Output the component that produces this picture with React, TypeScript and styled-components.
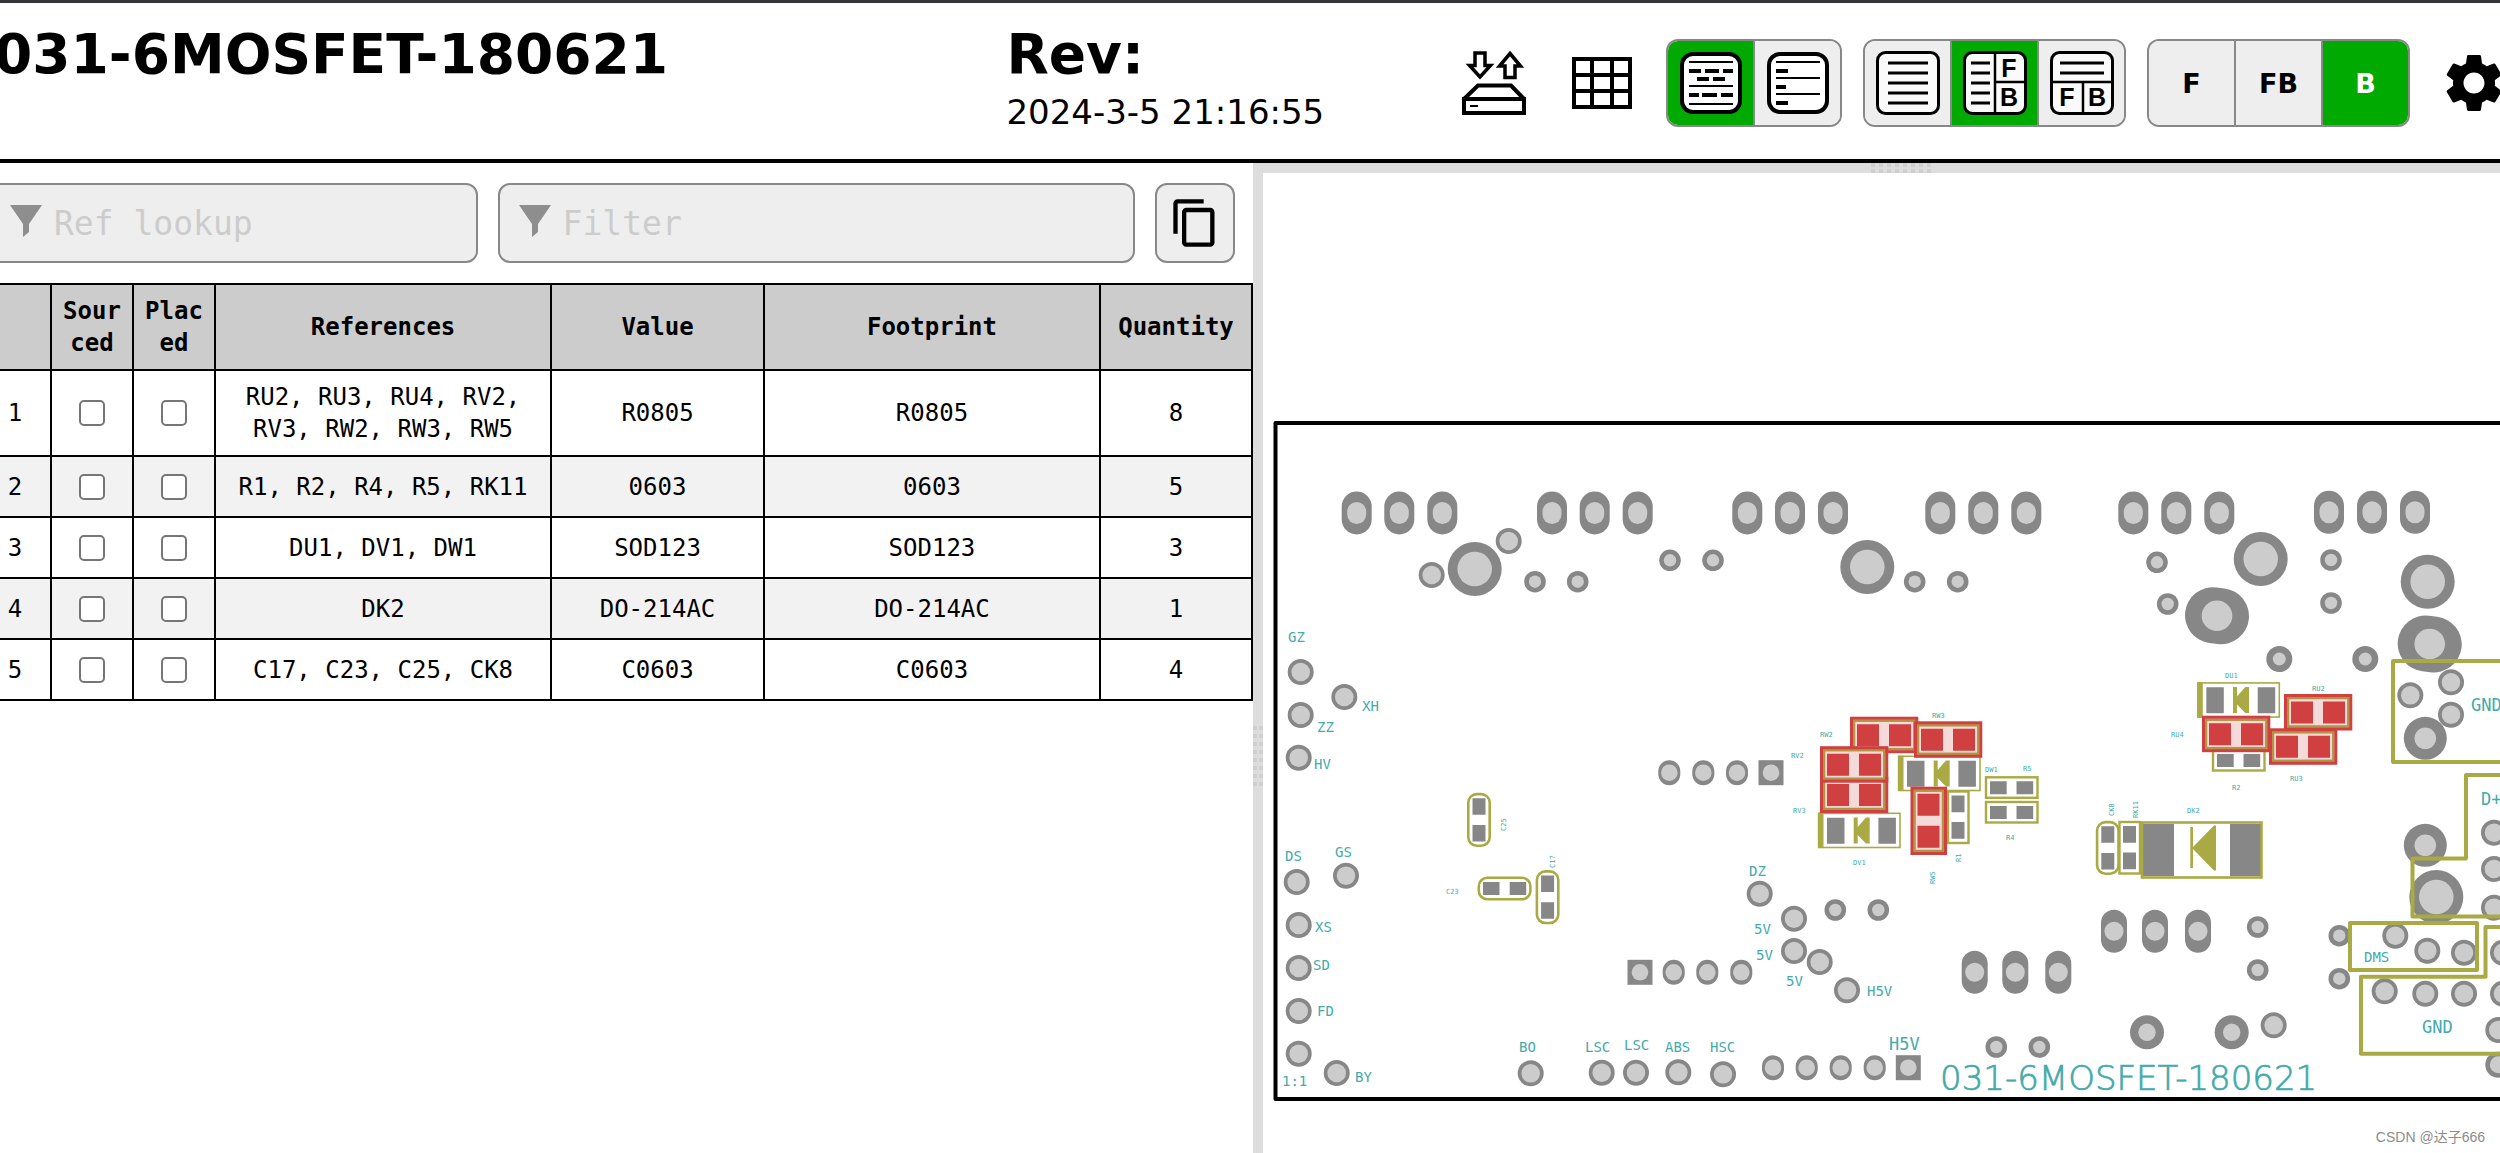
import React from "react";
import styled, { createGlobalStyle, css } from "styled-components";
import { MdContentCopy, MdSettings } from "react-icons/md";

const GlobalStyle = createGlobalStyle`
  * { box-sizing: border-box; }
  body { margin: 0; background: #fff; color: #000; font-family: Verdana, "DejaVu Sans", sans-serif; }
`;

const mono = `Consolas, "DejaVu Sans Mono", monospace`;

/* ---------- page frame ---------- */

const Viewport = styled.div`
  position: relative;
  height: 100vh;
  overflow: hidden;
`;

const Page = styled.div`
  display: flex;
  flex-direction: column;
  min-height: calc(100vh + 196px);
  margin: 0 -38px 0 -22px;
`;

const Header = styled.header`
  display: grid;
  grid-template-columns: minmax(0, 20fr) minmax(0, 9fr) auto;
  padding-left: 16px;
  border-top: 3px solid #363436;
  border-bottom: 4px solid #000;
`;

const HeaderText = styled.div`
  display: flex;
  flex-direction: column;
  gap: 8px;
  padding-top: 21px;
  white-space: nowrap;
`;

const Title = styled.h1`
  margin: 0;
  font-size: 55px;
  line-height: 60px;
  font-weight: 700;
`;

const Revision = styled(Title).attrs({ as: "h2" })``;

const Timestamp = styled.div`
  font-size: 34px;
  line-height: 40px;
`;

const Menu = styled.nav`
  display: flex;
  align-items: center;
  gap: 21px;
  padding: 36px 36px 32px 0;
`;

const IconButton = styled.button`
  display: flex;
  align-items: center;
  justify-content: center;
  padding: 0;
  border: 0;
  background: none;
  color: #000;
  cursor: pointer;
`;

const ToolIcons = styled.div`
  display: flex;
  align-items: center;
  gap: 46px;
  padding-right: 13px;
`;

const SettingsButton = styled(IconButton)`
  width: 56px;
  margin-left: 15px;
  svg { flex: none; }
`;

const ButtonGroup = styled.div`
  display: flex;
  height: 88px;
  border: 2px solid #888;
  border-radius: 12px;
  overflow: hidden;
`;

const GroupButton = styled.button<{ $active?: boolean }>`
  display: flex;
  align-items: center;
  justify-content: center;
  width: 87px;
  padding: 0;
  border: 0;
  border-right: 2px solid #888;
  background: ${(p) => (p.$active ? "#00aa00" : "#eee")};
  color: ${(p) => (p.$active ? "#fff" : "#000")};
  font: 700 27px Verdana, "DejaVu Sans", sans-serif;
  cursor: pointer;
  &:last-child { width: 85px; border-right: 0; }
`;

/* ---------- split panes ---------- */

const Main = styled.main`
  display: flex;
  flex: 1;
`;

const Pane = styled.section`
  flex: 1 1 0;
  min-width: 0;
`;

const Gutter = styled.div<{ $row?: boolean }>`
  display: flex;
  flex: none;
  align-items: center;
  justify-content: center;
  background: #ddd;
  ${(p) => (p.$row ? "height: 10px;" : "width: 10px;")}
`;

const Grip = styled.span<{ $row?: boolean }>`
  width: 10px;
  height: 60px;
  background: repeating-linear-gradient(90deg, transparent 0 4px, #ddd 4px 6px),
    repeating-linear-gradient(180deg, #cfcfcf 0 4px, #ddd 4px 8px);
  ${(p) =>
    p.$row &&
    css`
      width: 60px;
      height: 10px;
      background: repeating-linear-gradient(180deg, transparent 0 4px, #ddd 4px 6px),
        repeating-linear-gradient(90deg, #cfcfcf 0 4px, #ddd 4px 8px);
    `}
`;

/* ---------- filters ---------- */

const FilterBar = styled.form`
  display: flex;
  gap: 20px;
  padding: 20px 18px 20px 11px;
`;

const FilterBox = styled.label<{ $grow: number }>`
  display: flex;
  flex: ${(p) => p.$grow} 1 0;
  align-items: center;
  gap: 12px;
  min-width: 0;
  height: 80px;
  padding: 0 19px;
  border: 2px solid #888;
  border-radius: 12px;
  background: #eee;
  svg { flex: none; margin-bottom: 4px; }
`;

const FilterInput = styled.input`
  flex: 1;
  min-width: 0;
  padding: 0;
  border: 0;
  outline: 0;
  background: none;
  font: 33px ${mono};
  &::placeholder { color: #ccc; opacity: 1; }
`;

const CopyButton = styled(IconButton)`
  width: 80px;
  height: 80px;
  border: 2px solid #888;
  border-radius: 12px;
  background: #eee;
`;

/* ---------- parts table ---------- */

const BomTable = styled.table`
  width: 100%;
  table-layout: fixed;
  border-collapse: collapse;
  font: 24px/32px ${mono};
  text-align: center;
  th, td {
    padding: 10px;
    border: 2px solid #000;
  }
  th { background: #ccc; font-weight: 700; word-break: break-all; }
  tbody tr { height: 61px; }
  tbody tr:nth-child(even) { background: #f2f2f2; }
`;

const Col = styled.col<{ $w?: string }>`
  width: ${(p) => p.$w ?? "auto"};
`;

const Check = styled.input.attrs({ type: "checkbox" })`
  display: block;
  appearance: none;
  width: 26px;
  height: 26px;
  margin: 0 auto;
  border: 2px solid #767676;
  border-radius: 5px;
  background: #fff;
  &:checked { background: #00aa00; }
`;

const BoardSvg = styled.svg`
  display: block;
  width: 100%;
  height: auto;
`;

const Label = styled.text`
  font-family: "DejaVu Sans Mono", monospace;
  fill: #44aaaa;
`;

const BoardName = styled.text`
  font-family: "DejaVu Sans", sans-serif;
  font-weight: 200;
  font-size: 34px;
  fill: #44aaaa;
  stroke: #44aaaa;
  stroke-width: 0.7px;
`;

const Watermark = styled.div`
  position: absolute;
  right: 15px;
  bottom: 7px;
  font: 14px/18px "Liberation Sans", "Noto Sans CJK SC", sans-serif;
  color: #8c8c8c;
`;

/* ---------- icons ---------- */

const SaveIcon = () => (
  <svg width="64" height="66" viewBox="0 0 64 66" fill="none" stroke="#000" strokeWidth="4">
    <path d="M13 3H23V15.500H28.500L18 27L7.500 15.500H13Z" strokeWidth="3.500" />
    <path d="M48 3.500L58.500 16H53V27.500H43V16H37.500Z" strokeWidth="3.500" />
    <path d="M2 49L16 35.500H49L62 49" />
    <path d="M2 49H62V63H2Z" />
    <path d="M8 56H16" strokeWidth="2" />
  </svg>
);

const GridIcon = () => (
  <svg width="60" height="52" viewBox="0 0 60 52" fill="none" stroke="#000" strokeWidth="4">
    <path d="M2 2H58V50H2ZM2 18H58M2 34H58M20 2V50M40 2V50" />
  </svg>
);

const GroupedIcon = () => (
  <svg width="62" height="62" viewBox="0 0 62 62" fill="none" stroke="#000">
    <rect x="2" y="2" width="58" height="58" rx="11" fill="#fff" strokeWidth="4" />
    <path d="M9 10H53M9 34H53M9 52H53" strokeWidth="2" />
    <path d="M9 19H21M25 19H39M43 19H53M17 27H29M33 27H45M9 43H19M22 43H37M41 43H53" strokeWidth="4" />
  </svg>
);

const UngroupedIcon = () => (
  <svg width="62" height="62" viewBox="0 0 62 62" fill="none" stroke="#000">
    <rect x="2" y="2" width="58" height="58" rx="11" fill="#fff" strokeWidth="4" />
    <path d="M9 10H53M9 26H53M9 42H53" strokeWidth="2" />
    <path d="M9 19H21M9 35H19M9 51H21" strokeWidth="4" />
  </svg>
);

const LayoutText = styled.text`
  font: 700 25px "Liberation Sans", Arial, sans-serif;
  text-anchor: middle;
  fill: #000;
  stroke: none;
`;

const LayoutIcon = ({ kind }: { kind: "bom" | "lr" | "tb" }) => (
  <svg width="64" height="64" viewBox="0 0 64 64" fill="none" stroke="#000" strokeWidth="3">
    <rect x="1.500" y="1.500" width="61" height="61" rx="8" fill="#fafafa" />
    {kind === "bom" && <path d="M12 12H52M12 22H52M12 32H52M12 42H52M12 52H52" />}
    {kind === "lr" && (
      <>
        <path d="M8 12H27M8 22H27M8 32H27M8 42H27M8 52H27" />
        <path d="M32 2V62M32 31H62" strokeWidth="2.500" />
        <LayoutText x="46" y="26">F</LayoutText>
        <LayoutText x="46" y="55">B</LayoutText>
      </>
    )}
    {kind === "tb" && (
      <>
        <path d="M10 12H54M10 22H54" />
        <path d="M2 31H62M33 31V62" strokeWidth="2.500" />
        <LayoutText x="17" y="55">F</LayoutText>
        <LayoutText x="47" y="55">B</LayoutText>
      </>
    )}
  </svg>
);

const FunnelIcon = () => (
  <svg width="32" height="32" viewBox="0 0 32 32" fill="#8e8e8e">
    <path d="M0 0H32L19 19V27L13 32V19Z" />
  </svg>
);

/* ---------- board drawing ---------- */

const PAD = "#878787";
const HOLE = "#cccccc";
const SILK = "#aaaa44";
const MARK = "#d04040";

type Pt = [number, number];

// outer radius, hole radius and the places of each kind of round pad
const roundPads: { r: number; h: number; at: Pt[] }[] = [
  {
    r: 13, h: 9.3,
    at: [
      [1508.7, 541], [1431.7, 575], [1300.7, 672], [1300.7, 715], [1298.7, 757.7], [1344.3, 697],
      [2410.3, 695.3], [2451, 682.3], [2451, 714.7],
      [1296.7, 882], [1346, 875.7], [1298.7, 925], [1298.7, 968], [1298.7, 1011], [1298.7, 1053.7],
      [1336.7, 1073], [1530.7, 1073.3], [1601.7, 1072.7], [1636, 1072.7], [1678.3, 1072.3], [1723, 1074.3],
      [1759.7, 893.7], [1794, 918.7], [1794, 951], [1819.7, 962], [1847, 990.3], [2273.7, 1025.3],
      [2494, 832.7], [2494, 869], [2494, 907.7], [2395.3, 935.7], [2427.3, 950.7], [2464, 952.7],
      [2384.7, 991.3], [2425.3, 993.7], [2464, 993.7], [2503, 952.7], [2503, 993.7], [2498.3, 1030],
    ],
  },
  {
    r: 10.8, h: 6.2,
    at: [
      [1535, 581.7], [1577.7, 581.7], [1670, 560.3], [1713, 560.3], [1914.7, 581.7], [1957.7, 581.7],
      [2157, 562.3], [2167.7, 604], [2331, 560], [2331, 603], [1835.3, 910], [1878.3, 910],
      [1996.3, 1047], [2039.3, 1047], [2257.7, 927], [2257.7, 970], [2339.3, 935.7], [2339.3, 978.7],
    ],
  },
  { r: 27, h: 17.3, at: [[1474.7, 569], [1867.3, 567], [2260.7, 559], [2427.7, 581.7], [2436.3, 897]] },
  { r: 21.5, h: 10.8, at: [[2425.3, 738.3], [2425.3, 845.3]] },
  { r: 17, h: 8.7, at: [[2147, 1032.3], [2231.7, 1032.3]] },
  { r: 13, h: 6.5, at: [[2279.3, 659], [2365.3, 659]] },
  { r: 13, h: 8.5, at: [[2498.3, 1064.7]] },
];

const ovals: Pt[] = [
  ...[1356.7, 1399.3, 1442.3, 1552, 1594.7, 1637.7, 1747.3, 1790, 1833, 1940.3, 1983.3, 2026.3, 2133.3, 2176.3, 2219.3].map(
    (x): Pt => [x, 513]
  ),
  [2329, 512.3], [2372, 512.3], [2415, 512.3],
];

const tallPads: Pt[] = [
  [1974.7, 972.3], [2015.3, 972.3], [2058.3, 972.3], [2114, 931.3], [2155, 931.3], [2198, 931.3],
];

const pins: Pt[] = [
  [1669.3, 772.7], [1703.3, 772.7], [1737, 772.7],
  [1673.7, 972.3], [1707.3, 972.3], [1741.3, 972.3],
  [1773, 1067.7], [1806.7, 1067.7], [1840.7, 1067.7], [1874.7, 1067.7],
];

const firstPins: Pt[] = [[1771, 772.7], [1640, 972.3], [1908.3, 1067.7]];

const labels: [string, number, number, number][] = [
  ["GZ", 1288, 642, 14], ["XH", 1362, 711, 14], ["ZZ", 1317, 732, 14], ["HV", 1314, 769, 14],
  ["DS", 1285, 861, 14], ["GS", 1335, 857, 14], ["XS", 1315, 932, 14], ["SD", 1313, 970, 14],
  ["FD", 1317, 1016, 14], ["BY", 1355, 1082, 14], ["1:1", 1282, 1086, 14], ["BO", 1519, 1052, 14],
  ["LSC", 1585, 1052, 14], ["LSC", 1624, 1050, 14], ["ABS", 1665, 1052, 14], ["HSC", 1710, 1052, 14],
  ["DZ", 1749, 876, 14], ["5V", 1754, 934, 14], ["5V", 1756, 960, 14], ["5V", 1786, 986, 14],
  ["H5V", 1867, 996, 14], ["H5V", 1889, 1050, 17], ["GND", 2471, 711, 17], ["D+", 2481, 805, 17],
  ["DMS", 2364, 962, 14], ["GND", 2422, 1033, 17],
  ["DU1", 2225, 678, 7], ["RU2", 2312, 691, 7], ["RU4", 2171, 737, 7], ["RU3", 2290, 781, 7],
  ["R2", 2232, 790, 7], ["DK2", 2187, 813, 7], ["C23", 1446, 894, 7], ["RW3", 1932, 718, 7],
  ["RW2", 1820, 737, 7], ["RV2", 1791, 758, 7], ["RV3", 1793, 813, 7], ["DV1", 1853, 865, 7],
  ["DW1", 1985, 772, 7], ["R5", 2023, 771, 7], ["R4", 2006, 840, 7],
];

const uprightLabels: [string, number, number][] = [
  ["CK8", 2114, 816], ["RK11", 2138, 818], ["C25", 1506, 831], ["C17", 1555, 868], ["R1", 1961, 862], ["RW5", 1935, 884],
];

const Place = ({ x, y, upright, children }: { x: number; y: number; upright?: boolean; children: React.ReactNode }) => (
  <g transform={`translate(${x} ${y})${upright ? " rotate(90)" : ""}`}>{children}</g>
);

const Capacitor = () => (
  <>
    <rect x="1.100" y="1.100" width="51.600" height="21.400" rx="8.500" fill="none" stroke={SILK} strokeWidth="2.600" />
    <path d="M5.300 5.300h16.500v13H5.300ZM32 5.300h16.500v13H32Z" fill={PAD} />
  </>
);

const Resistor = () => (
  <>
    <rect x="1" y="1" width="51.500" height="20.500" fill="none" stroke={SILK} strokeWidth="2.400" />
    <path d="M5 5h16.700v13H5ZM31.500 5h16.700v13H31.500Z" fill={PAD} />
  </>
);

const Diode = () => (
  <>
    <rect x="0.600" y="0.600" width="81.400" height="34.200" fill="none" stroke={SILK} strokeWidth="1.600" />
    <path d="M0 0h5.500v35.400H0ZM35.700 4.700h4v9.500L48 4.700h3.700v26H48l-8.300-8.500v8.500h-4Z" fill={SILK} />
    <path d="M9 5h17.500v26H9ZM60.400 5h17.500v26H60.400Z" fill={PAD} />
  </>
);

const MarkedResistor = () => (
  <>
    <rect x="4" y="4" width="60.300" height="28.500" fill="#fff" stroke={SILK} strokeWidth="2.500" />
    <rect x="1.500" y="1.500" width="65.300" height="33.500" fill={MARK} fillOpacity="0.200" stroke={MARK} strokeWidth="3" />
    <path d="M7 7.500h22v22H7ZM39 7.500h22v22H39Z" fill={MARK} />
  </>
);

const Board = () => (
  <BoardSvg viewBox="1263 173 1275 980" role="img" aria-label="Board, back side">
    {ovals.map(([x, y]) => (
      <g key={`${x}-${y}`}>
        <rect x={x - 15} y={y - 21.5} width="30" height="43" rx="15" fill={PAD} />
        <rect x={x - 9.5} y={y - 11} width="19" height="22" rx="9.500" fill={HOLE} />
      </g>
    ))}
    {tallPads.map(([x, y]) => (
      <g key={`${x}-${y}`}>
        <rect x={x - 13} y={y - 21.5} width="26" height="43" rx="13" fill={PAD} />
        <circle cx={x} cy={y} r="9.500" fill={HOLE} />
      </g>
    ))}
    {pins.map(([x, y]) => (
      <g key={`${x}-${y}`}>
        <rect x={x - 11} y={y - 12.5} width="22" height="25" rx="11" fill={PAD} />
        <circle cx={x} cy={y} r="8.300" fill={HOLE} />
      </g>
    ))}
    {firstPins.map(([x, y]) => (
      <g key={`${x}-${y}`}>
        <rect x={x - 12.5} y={y - 12.5} width="25" height="25" fill={PAD} />
        <circle cx={x} cy={y} r="8.300" fill={HOLE} />
      </g>
    ))}
    <path d="M2213 615.200L2221 616.200M2425.700 643.500L2433.700 644.500" stroke={PAD} strokeWidth="56" strokeLinecap="round" />
    <circle cx="2217" cy="615.700" r="15.300" fill={HOLE} />
    <circle cx="2429.700" cy="644" r="15.300" fill={HOLE} />
    {roundPads.map(({ r, h, at }) =>
      at.map(([x, y]) => (
        <g key={`${x}-${y}`}>
          <circle cx={x} cy={y} r={r} fill={PAD} />
          <circle cx={x} cy={y} r={h} fill={HOLE} />
        </g>
      ))
    )}

    <g fill="none" stroke={SILK} strokeWidth="4" strokeLinejoin="round">
      <path d="M2540 661H2393V762H2540" />
      <path d="M2540 775H2466V858.500H2412.500V916.500H2540" />
      <path d="M2350 923H2477V970H2350Z" />
      <path d="M2540 927H2485.500V976.700H2361V1053.700H2540" />
    </g>

    <Place x={1490.8} y={793} upright><Capacitor /></Place>
    <Place x={1477.7} y={876.7}><Capacitor /></Place>
    <Place x={1559.4} y={870.3} upright><Capacitor /></Place>
    <Place x={2119.6} y={821} upright><Capacitor /></Place>
    <Place x={2141} y={821} upright><Resistor /></Place>
    <Place x={1985} y={776.3}><Resistor /></Place>
    <Place x={1985} y={801}><Resistor /></Place>
    <Place x={2212} y={749}><Resistor /></Place>
    <Place x={1969.5} y={790.5} upright><Resistor /></Place>
    <Place x={2197.3} y={682.3}><Diode /></Place>
    <Place x={1818} y={812.7}><Diode /></Place>
    <Place x={1898} y={755.7}><Diode /></Place>

    <path d="M2143 824h31v52h-31ZM2230 824h31v52h-31Z" fill={PAD} />
    <rect x="2142" y="822.500" width="119.500" height="55" fill="none" stroke={SILK} strokeWidth="2.600" />
    <path d="M2190.300 827h2.700v20L2214 825.500h2V870.500h-2L2193 849v19h-2.700Z" fill={SILK} />

    <Place x={1850} y={716.7}><MarkedResistor /></Place>
    <Place x={1914} y={721.3}><MarkedResistor /></Place>
    <Place x={1820} y={776.5}><MarkedResistor /></Place>
    <Place x={1820} y={746.2}><MarkedResistor /></Place>
    <Place x={1947} y={786.7} upright><MarkedResistor /></Place>
    <Place x={2284} y={694}><MarkedResistor /></Place>
    <Place x={2202} y={715.7}><MarkedResistor /></Place>
    <Place x={2269} y={728.3}><MarkedResistor /></Place>

    {labels.map(([t, x, y, size]) => (
      <Label key={`${t}-${x}-${y}`} x={x} y={y} fontSize={size}>{t}</Label>
    ))}
    {uprightLabels.map(([t, x, y]) => (
      <Label key={t} fontSize={7} transform={`translate(${x} ${y}) rotate(-90)`}>{t}</Label>
    ))}
    <BoardName x="1940" y="1090">031-6MOSFET-180621</BoardName>
    <path d="M2540 423H1275.500V1099H2540" fill="none" stroke="#000" strokeWidth="4" strokeLinejoin="round" />
  </BoardSvg>
);

/* ---------- data ---------- */

const parts = [
  { refs: "RU2, RU3, RU4, RV2, RV3, RW2, RW3, RW5", value: "R0805", footprint: "R0805", qty: 8 },
  { refs: "R1, R2, R4, R5, RK11", value: "0603", footprint: "0603", qty: 5 },
  { refs: "DU1, DV1, DW1", value: "SOD123", footprint: "SOD123", qty: 3 },
  { refs: "DK2", value: "DO-214AC", footprint: "DO-214AC", qty: 1 },
  { refs: "C17, C23, C25, CK8", value: "C0603", footprint: "C0603", qty: 4 },
];

export default function App() {
  return (
    <Viewport>
      <GlobalStyle />
      <Page>
        <Header>
          <HeaderText>
            <Title>031-6MOSFET-180621</Title>
          </HeaderText>
          <HeaderText>
            <Revision>Rev:</Revision>
            <Timestamp>2024-3-5 21:16:55</Timestamp>
          </HeaderText>
          <Menu>
            <ToolIcons>
              <IconButton aria-label="Save and load"><SaveIcon /></IconButton>
              <IconButton aria-label="Nets"><GridIcon /></IconButton>
            </ToolIcons>
            <ButtonGroup>
              <GroupButton $active aria-label="Grouped"><GroupedIcon /></GroupButton>
              <GroupButton aria-label="Ungrouped"><UngroupedIcon /></GroupButton>
            </ButtonGroup>
            <ButtonGroup>
              <GroupButton aria-label="Table only"><LayoutIcon kind="bom" /></GroupButton>
              <GroupButton $active aria-label="Table left"><LayoutIcon kind="lr" /></GroupButton>
              <GroupButton aria-label="Table top"><LayoutIcon kind="tb" /></GroupButton>
            </ButtonGroup>
            <ButtonGroup>
              <GroupButton>F</GroupButton>
              <GroupButton>FB</GroupButton>
              <GroupButton $active>B</GroupButton>
            </ButtonGroup>
            <SettingsButton aria-label="Settings"><MdSettings size={70} /></SettingsButton>
          </Menu>
        </Header>
        <Main>
          <Pane>
            <FilterBar>
              <FilterBox $grow={3}>
                <FunnelIcon />
                <FilterInput type="text" placeholder="Ref lookup" aria-label="Ref lookup" />
              </FilterBox>
              <FilterBox $grow={4}>
                <FunnelIcon />
                <FilterInput type="text" placeholder="Filter" aria-label="Filter" />
              </FilterBox>
              <CopyButton type="button" aria-label="Copy table"><MdContentCopy size={52} /></CopyButton>
            </FilterBar>
            <BomTable>
              <colgroup>
                <Col $w="72px" />
                <Col $w="82px" />
                <Col $w="82px" />
                <Col $w="26.4%" />
                <Col />
                <Col $w="26.4%" />
                <Col $w="152px" />
              </colgroup>
              <thead>
                <tr>
                  <th />
                  <th>Sourced</th>
                  <th>Placed</th>
                  <th>References</th>
                  <th>Value</th>
                  <th>Footprint</th>
                  <th>Quantity</th>
                </tr>
              </thead>
              <tbody>
                {parts.map((p, i) => (
                  <tr key={p.refs}>
                    <td>{i + 1}</td>
                    <td><Check aria-label={`Sourced, row ${i + 1}`} /></td>
                    <td><Check aria-label={`Placed, row ${i + 1}`} /></td>
                    <td>{p.refs}</td>
                    <td>{p.value}</td>
                    <td>{p.footprint}</td>
                    <td>{p.qty}</td>
                  </tr>
                ))}
              </tbody>
            </BomTable>
          </Pane>
          <Gutter><Grip /></Gutter>
          <Pane>
            <Gutter $row><Grip $row /></Gutter>
            <Board />
          </Pane>
        </Main>
      </Page>
      <Watermark>CSDN @达子666</Watermark>
    </Viewport>
  );
}
